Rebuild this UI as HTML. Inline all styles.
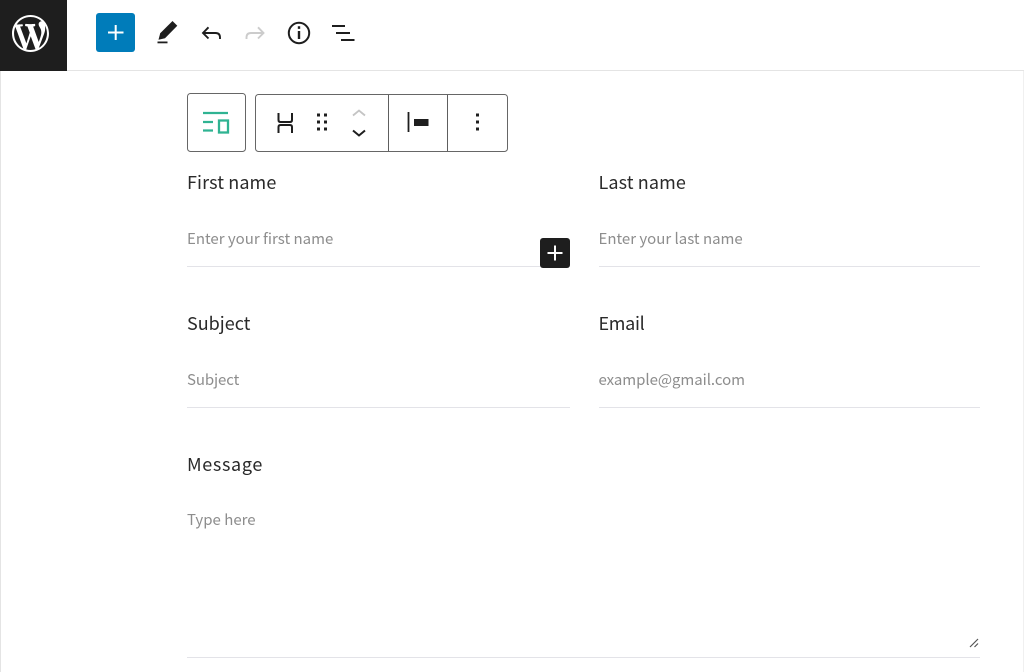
<!DOCTYPE html>
<html><head><meta charset="utf-8"><style>
html,body{margin:0;padding:0;width:1024px;height:672px;overflow:hidden;background:#fff;font-family:"Noto Sans CJK JP","Liberation Sans",sans-serif}
#w{position:absolute;left:0;top:0;width:1024px;height:672px;filter:blur(.35px)}
.a{position:absolute}
svg{position:absolute;display:block;left:0;top:0}
.l{position:absolute;font-size:18px;line-height:24px;color:#2a2a2a;white-space:nowrap;letter-spacing:.1px}
.p{position:absolute;font-size:15px;line-height:20px;color:#8d8d8d;white-space:nowrap}
.u{position:absolute;height:1px;background:#e3e3e8}
</style></head><body><div id="w">
<div class="a" style="left:0;top:70px;width:1024px;height:1px;background:#e4e4e4"></div>
<div class="a" style="left:0;top:71px;width:1px;height:601px;background:#e4e4e4"></div>
<div class="a" style="left:1023px;top:71px;width:1px;height:601px;background:#f0f0f0"></div>
<div class="a" style="left:0;top:0;width:67px;height:71px;background:#1e1e1e"></div>
<svg style="left:12px;top:15px" width="37" height="37" viewBox="0 0 20 20"><path fill="#fff" d="M20 10c0-5.510-4.490-10-10-10C4.480 0 0 4.490 0 10c0 5.520 4.480 10 10 10 5.510 0 10-4.480 10-10zM7.780 15.370L4.370 6.220c.55-.02 1.170-.08 1.170-.08.5-.06.44-1.130-.06-1.110 0 0-1.450.11-2.370.11-.18 0-.37 0-.58-.01C4.120 2.690 6.870 1.110 10 1.110c2.330 0 4.450.87 6.050 2.340-.68-.11-1.650.39-1.650 1.580 0 .74.45 1.360.9 2.100.35.61.55 1.360.55 2.460 0 1.490-1.400 5-1.400 5l-3.030-8.370c.54-.02.82-.17.82-.17.5-.05.44-1.250-.06-1.220 0 0-1.440.12-2.380.12-.87 0-2.330-.12-2.330-.12-.5-.03-.56 1.200-.06 1.220l.92.08 1.260 3.410zM17.410 10c.24-.64.74-1.870.43-4.250.7 1.290 1.050 2.710 1.050 4.250 0 3.290-1.730 6.240-4.400 7.780.97-2.590 1.940-5.200 2.920-7.780zM6.100 18.090C3.120 16.650 1.110 13.530 1.110 10c0-1.300.23-2.480.72-3.590C3.250 10.300 4.670 14.200 6.100 18.090zm4.030-6.630l2.580 6.980c-.86.29-1.760.45-2.710.45-.79 0-1.570-.11-2.290-.33.81-2.380 1.620-4.740 2.420-7.100z"/></svg>
<div class="a" style="left:96px;top:13px;width:39px;height:39px;background:#007cba;border-radius:3px"></div>
<svg width="1024" height="672" viewBox="0 0 1024 672" fill="none">
<path d="M115.700 25v15M108 32.500h15.500" stroke="#fff" stroke-width="2"/>
<path fill="#1e1e1e" d="M172.500 21 177.300 25.800 165 38.200 158.500 39.800 160.200 33.300Z"/>
<rect x="157.500" y="41.500" width="10" height="1.800" fill="#1e1e1e"/>
<path stroke="#1e1e1e" stroke-width="1.900" d="M208.500 27.300 203 33 208.500 38.500M203 33H215.500q4.500 0 4.500 4.500V39"/>
<path stroke="#ccc" stroke-width="1.900" d="M258 27.300 263.500 33 258 38.500M263.500 33H251q-4.500 0-4.500 4.500V39"/>
<circle cx="299" cy="33" r="10.200" stroke="#1e1e1e" stroke-width="2"/>
<path stroke="#1e1e1e" stroke-width="2.400" d="M299 31v8M299 26.300v2.600"/>
<path stroke="#1e1e1e" stroke-width="2" d="M332 26h13M336 33h14M341 40h13.500"/>

<rect x="187.500" y="93.500" width="58" height="58" rx="3" stroke="#666"/>
<rect x="255.500" y="94.500" width="252" height="57" rx="3" stroke="#666"/>
<path stroke="#5e5e5e" d="M388.500 95v56M447.500 95v56"/>

<path stroke="#2fb392" stroke-width="2.300" d="M203 113h25M203 122h10M203 130.500h10"/>
<rect x="219" y="120.500" width="9" height="12" stroke="#2fb392" stroke-width="2.300"/>

<path stroke="#1e1e1e" stroke-width="2" d="M278.500 113v7q0 2 2 2h9.500q2 0 2-2v-7M278.500 133v-6q0-2 2-2h9.500q2 0 2 2v6"/>
<path stroke="#1e1e1e" stroke-width="3" stroke-dasharray="3 4" d="M318.500 113.500v18M325.500 113.500v18"/>
<path stroke="#c4c4c4" stroke-width="1.800" d="M353 115.500 359 110.500 365 115.500"/>
<path stroke="#1e1e1e" stroke-width="2" d="M353 130.500 359 135.500 365 130.500"/>
<path stroke="#1e1e1e" stroke-width="1.800" d="M408.500 112v20"/>
<rect x="414" y="119" width="14.500" height="7" fill="#1e1e1e"/>
<path stroke="#1e1e1e" stroke-width="3" stroke-dasharray="3 4" d="M477.500 113.500v18"/>
</svg>

<div class="l" style="left:187px;top:170px">First name</div>
<div class="l" style="left:598.500px;top:170px">Last name</div>
<div class="p" style="left:187px;top:229px">Enter your first name</div>
<div class="p" style="left:598.500px;top:229px">Enter your last name</div>
<div class="u" style="left:187px;top:266px;width:383px"></div>
<div class="u" style="left:598.500px;top:266px;width:381.500px"></div>
<div class="a" style="left:540px;top:238px;width:30px;height:30px;background:#1e1e1e;border-radius:3px"></div>
<svg style="left:540px;top:238px" width="30" height="30" viewBox="0 0 30 30"><path stroke="#fff" stroke-width="2" d="M15 7.500v15M7.500 15h15"/></svg>

<div class="l" style="left:187px;top:311px;letter-spacing:0">Subject</div>
<div class="l" style="left:598.500px;top:311px;letter-spacing:-.3px">Email</div>
<div class="p" style="left:187px;top:370px;letter-spacing:-.1px">Subject</div>
<div class="p" style="left:598.500px;top:370px;letter-spacing:-.05px">example@gmail.com</div>
<div class="u" style="left:187px;top:407px;width:383px"></div>
<div class="u" style="left:598.500px;top:407px;width:381.500px"></div>

<div class="l" style="left:187px;top:452px;letter-spacing:.65px">Message</div>
<div class="p" style="left:187px;top:510px">Type here</div>
<svg style="left:968px;top:637px" width="12" height="12" viewBox="0 0 12 12"><path fill="none" stroke="#555" stroke-width="1.200" d="M2 10 10 2M6.500 10 10 6.500"/></svg>
<div class="u" style="left:187px;top:657px;width:793px"></div>
</div></body></html>
